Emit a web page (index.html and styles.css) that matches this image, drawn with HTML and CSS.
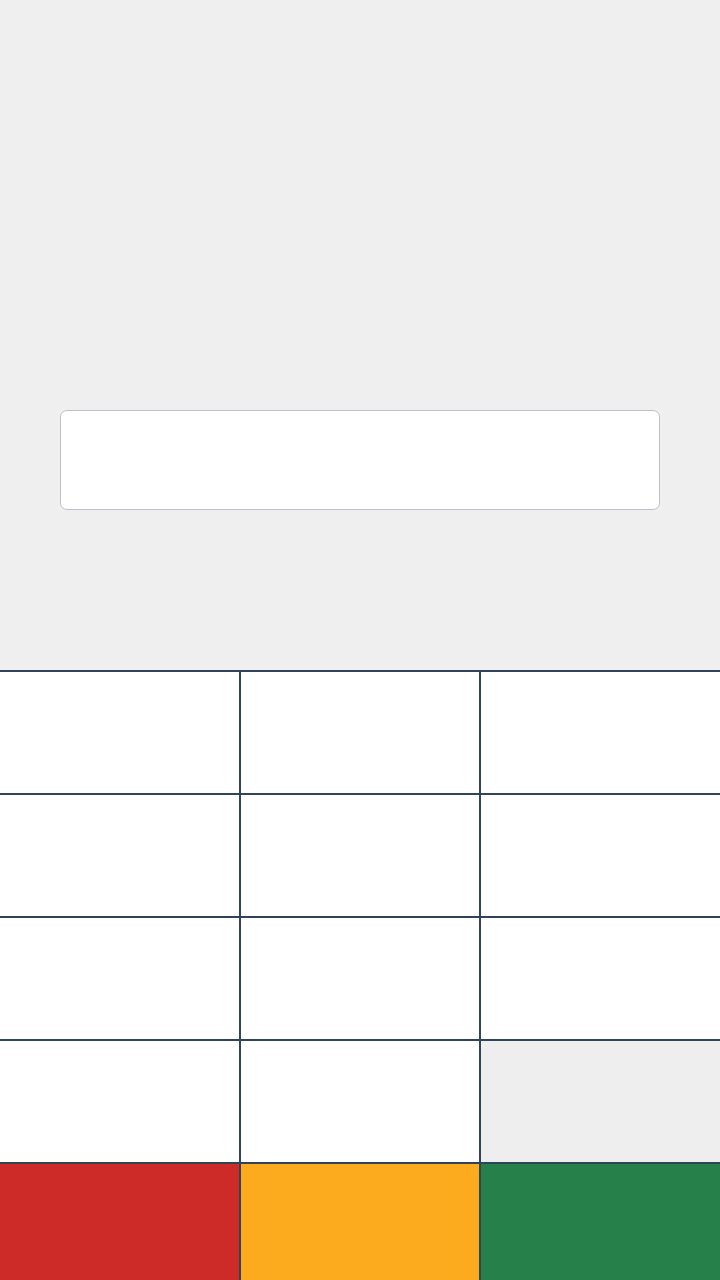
FILE: index.html
```html
<!DOCTYPE html>
<html>
<head>
<meta charset="utf-8">
<link rel="stylesheet" href="styles.css">
</head>
<body>
<div class="screen">
  <div class="display">
    <div class="field"></div>
  </div>
  <div class="pad">
    <div class="key"></div><div class="key"></div><div class="key"></div>
    <div class="key"></div><div class="key"></div><div class="key"></div>
    <div class="key"></div><div class="key"></div><div class="key"></div>
    <div class="key"></div><div class="key"></div><div class="key empty"></div>
    <div class="key red"></div><div class="key orange"></div><div class="key green"></div>
  </div>
</div>
</body>
</html>
```
FILE: styles.css
```css
html, body {
  margin: 0;
  padding: 0;
  background: #efefef;
  font-family: "Roboto", "Liberation Sans", sans-serif;
}
.screen {
  width: 720px;
  height: 1280px;
  overflow: hidden;
  display: flex;
  flex-direction: column;
}
.display {
  height: 670px;
  flex-shrink: 0;
  box-sizing: border-box;
  padding: 410px 60px 0 60px;
}
.field {
  height: 100px;
  box-sizing: border-box;
  background: #ffffff;
  border: 1px solid #c0bfc9;
  border-radius: 7px;
}
.pad {
  flex-shrink: 0;
  display: grid;
  grid-template-columns: 241px 240px 241px;
  grid-template-rows: repeat(5, 123px);
  margin-left: -1px;
  border-top: 1px solid #2f4458;
}
.key {
  background: #ffffff;
  border: 1px solid #2f4458;
}
.key.empty { background: #eeeeee; }
.key.red { background: #cc2b28; }
.key.orange { background: #fcab1f; }
.key.green { background: #268049; }
```
